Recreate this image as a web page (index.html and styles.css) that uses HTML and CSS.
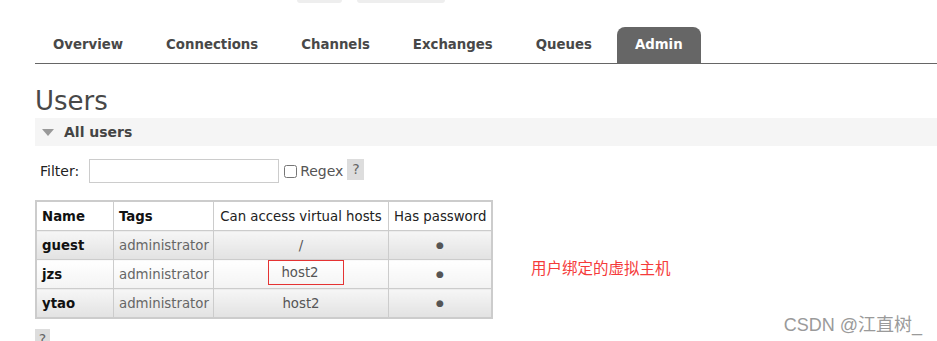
FILE: index.html
```html
<!DOCTYPE html>
<html lang="en">
<head>
    <meta charset="UTF-8">
    <title>RabbitMQ Management - Users</title>
    <link rel="stylesheet" href="styles.css">
</head>
<body>
    <!-- tombol atas yang terpotong -->
    <div class="top-bar">
        <div class="top-btn small"></div>
        <div class="top-btn wide"></div>
    </div>

    <div class="main">
        <ul class="tabs">
            <li>Overview</li>
            <li>Connections</li>
            <li>Channels</li>
            <li>Exchanges</li>
            <li>Queues</li>
            <li class="active">Admin</li>
        </ul>

        <h1>Users</h1>

        <div class="section-head">
            <span class="arrow"></span>
            <span>All users</span>
        </div>

        <div class="filter">
            <label>Filter:</label>
            <input type="text" class="filter-input">
            <input type="checkbox" class="regex-box">
            <span class="regex">Regex</span>
            <span class="help">?</span>
        </div>

        <div class="table-row">
            <table class="users">
                <thead>
                    <tr>
                        <th class="bold col-name">Name</th>
                        <th class="bold col-tags">Tags</th>
                        <th class="col-vhost">Can access virtual hosts</th>
                        <th class="col-pass">Has password</th>
                    </tr>
                </thead>
                <tbody>
                    <tr class="alt1">
                        <td class="name">guest</td>
                        <td class="tags">administrator</td>
                        <td class="c">/</td>
                        <td class="c dot">&#9679;</td>
                    </tr>
                    <tr class="alt2">
                        <td class="name">jzs</td>
                        <td class="tags">administrator</td>
                        <td class="c"><span class="marked">host2</span></td>
                        <td class="c dot">&#9679;</td>
                    </tr>
                    <tr class="alt1">
                        <td class="name">ytao</td>
                        <td class="tags">administrator</td>
                        <td class="c">host2</td>
                        <td class="c dot">&#9679;</td>
                    </tr>
                </tbody>
            </table>
            <div class="note">用户绑定的虚拟主机</div>
        </div>

        <div class="bottom">
            <span class="help small-help">?</span>
        </div>
    </div>

    <div class="watermark">CSDN @江直树_</div>
</body>
</html>
```

FILE: styles.css
```css
body {
    margin: 0;
    font-family: "DejaVu Sans", Verdana, sans-serif;
    color: #484848;
    background-color: #fff;
    overflow: hidden;
    position: relative;
    height: 341px;
}

.top-bar {
    display: flex;
    gap: 15px;
    padding-left: 297px;
    height: 3px;
}

.top-btn {
    height: 3px;
    background-color: #eee;
    border-radius: 0 0 6px 6px;
}

.top-btn.small {
    width: 45px;
}

.top-btn.wide {
    width: 88px;
}

.main {
    padding-left: 35px;
}

.tabs {
    display: flex;
    gap: 7px;
    list-style: none;
    margin: 24px 0 0 0;
    padding: 0;
    border-bottom: 1px solid #666;
}

.tabs li {
    height: 36px;
    line-height: 36px;
    padding: 0 18px;
    font-size: 13.3px;
    font-weight: bold;
    color: #484848;
}

.tabs li.active {
    background-color: #666;
    color: #fff;
    border-radius: 8px 8px 0 0;
}

h1 {
    font-size: 26px;
    font-weight: normal;
    margin: 22px 0 0 0;
    line-height: 30px;
    color: #484848;
}

.section-head {
    display: flex;
    align-items: center;
    height: 28px;
    margin-top: 2px;
    background-color: #f5f5f5;
    font-size: 14px;
    font-weight: bold;
    color: #444;
}

.arrow {
    width: 0;
    height: 0;
    margin: 0 10px 0 7px;
    border-left: 6px solid transparent;
    border-right: 6px solid transparent;
    border-top: 7px solid #999;
}

.filter {
    display: flex;
    align-items: center;
    height: 24px;
    margin-top: 13px;
    padding-left: 5px;
    font-size: 14px;
    color: #222;
}

.filter label {
    margin-right: 10px;
}

.filter-input {
    width: 186px;
    height: 20px;
    margin: 0;
    border: 1px solid #ccc;
    padding: 1px;
}

.regex-box {
    width: 13px;
    height: 13px;
    margin: 0 3px 0 5px;
}

.regex {
    color: #555;
}

.help {
    display: inline-block;
    width: 17px;
    height: 21px;
    line-height: 21px;
    margin-left: 4px;
    margin-top: -3px;
    text-align: center;
    background-color: #ddd;
    color: #666;
    font-size: 14px;
}

.table-row {
    display: flex;
    align-items: flex-start;
    margin-top: 17px;
}

.users {
    width: 458px;
    flex-shrink: 0;
    border-collapse: collapse;
    border: 2px solid #ccc;
    font-size: 13.3px;
    table-layout: fixed;
}

.col-name {
    width: 66px;
}

.col-tags {
    width: 89px;
}

.col-vhost {
    width: 164px;
}

.users th,
.users td {
    border: 1px solid #ccc;
    height: 28px;
    padding: 0 5px;
    white-space: nowrap;
    overflow: hidden;
}

.users th {
    background-color: #fff;
    font-weight: normal;
    color: #222;
    text-align: center;
}

.users th.bold {
    font-weight: bold;
    text-align: left;
    color: #111;
}

.users tr.alt1 td {
    background: linear-gradient(#f6f6f6, #e2e2e2);
}

.users tr.alt2 td {
    background: linear-gradient(#fff, #f3f3f3);
}

.users td.name {
    font-weight: bold;
    color: #111;
}

.users td.tags {
    color: #666;
}

.users td.c {
    text-align: center;
    color: #555;
    overflow: visible;
}

.users td.dot {
    font-size: 9px;
}

/* kotak merah anotasi */
.marked {
    display: inline-block;
    position: relative;
    top: -2px;
    left: 5px;
    padding: 4px 24px 4px 12px;
    border: 1px solid #e53333;
}

.note {
    margin: 56px 0 0 38px;
    color: #f53b3b;
    font-size: 15.5px;
    font-family: "Noto Sans CJK SC", sans-serif;
}

.bottom {
    margin-top: 10px;
}

.small-help {
    width: 15px;
    margin: 0;
}

.watermark {
    position: absolute;
    right: 15px;
    top: 310px;
    font-family: "Liberation Sans", "Noto Sans CJK SC", sans-serif;
    font-size: 18px;
    color: #9a9a9a;
}
```
